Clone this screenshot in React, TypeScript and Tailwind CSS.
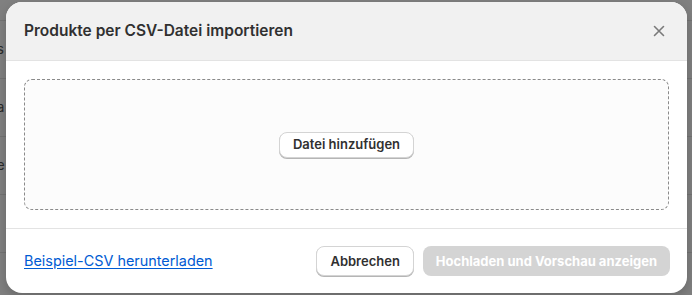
import React from "react";

const rows = ["s", "a", "e", "", ""];

export default function App() {
  return (
    <div
      className="relative w-[692px] h-[295px] overflow-hidden bg-[#808080]"
      style={{ fontFamily: "Inter, 'Noto Sans', sans-serif" }}
    >
      {/* background page under the overlay */}
      <div className="flex flex-col text-[13px] text-[#2a2a2a]">
        <div className="h-[21px] border-b border-[#737373]" />
        {rows.map((r, i) => (
          <div key={i} className="h-[58px] border-b border-[#737373] flex items-center">
            <span className="-ml-[3px]">{r}</span>
          </div>
        ))}
      </div>

      {/* dialog */}
      <div className="absolute inset-0 pl-[6px] pt-[2px]">
        <div className="w-[681px] h-[291px] rounded-[16px] bg-white overflow-hidden flex flex-col shadow-[0_4px_12px_rgba(0,0,0,0.2)]">
          {/* header */}
          <div className="h-[59px] bg-[#f1f1f1] border-b border-[#e3e3e3] flex items-center justify-between pl-[18px] pr-[22px]">
            <h2 className="text-[15.5px] font-semibold text-[#303030]">
              Produkte per CSV-Datei importieren
            </h2>
            <svg width="12" height="12" viewBox="0 0 12 12" className="text-[#7a7a7a]">
              <path d="M1.5 1.5L10.5 10.5M10.5 1.5L1.5 10.5" stroke="currentColor" strokeWidth="1.6" strokeLinecap="round" />
            </svg>
          </div>

          {/* body */}
          <div className="flex-1 p-[18px] border-b border-[#e3e3e3]">
            <div className="h-[131px] rounded-[8px] border border-dashed border-[#8a8a8a] bg-[#fcfcfc] flex items-center justify-center">
              <button className="h-[26px] px-[13px] rounded-[8px] bg-white border border-[#d4d4d4] shadow-[0_1px_0_#b5b5b5] text-[13px] font-semibold text-[#303030] leading-none">
                Datei hinzufügen
              </button>
            </div>
          </div>

          {/* footer */}
          <div className="h-[64px] flex items-center justify-between pl-[18px] pr-[17px]">
            <a className="text-[14.4px] text-[#005bd3] underline underline-offset-[2px] cursor-pointer">
              Beispiel-CSV herunterladen
            </a>
            <div className="flex items-center gap-[9px]">
              <button className="h-[30px] px-[13px] rounded-[8px] bg-white border border-[#d4d4d4] shadow-[0_1px_0_#b5b5b5] text-[13px] font-semibold text-[#303030] leading-none">
                Abbrechen
              </button>
              <button className="h-[30px] px-[13px] rounded-[8px] bg-[#d4d4d4] text-[13px] font-bold text-white leading-none">
                Hochladen und Vorschau anzeigen
              </button>
            </div>
          </div>
        </div>
      </div>
    </div>
  );
}
